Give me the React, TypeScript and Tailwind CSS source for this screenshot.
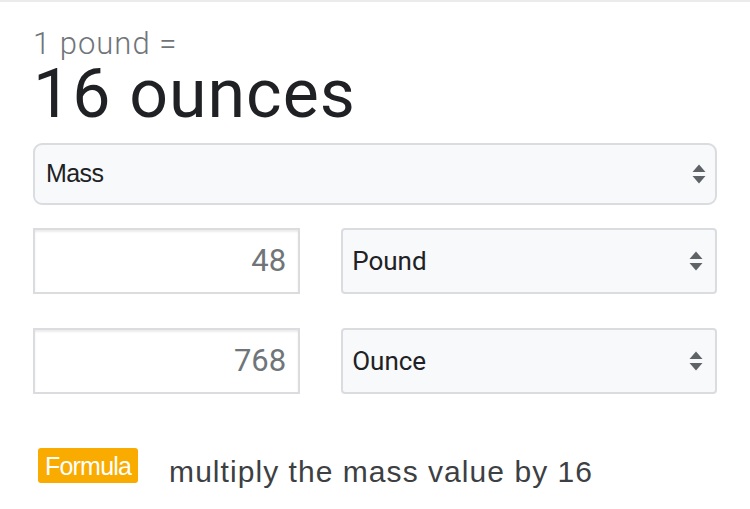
import React from "react";

function Arrows() {
  return (
    <svg width="14" height="24" viewBox="0 0 14 24" className="shrink-0">
      <path d="M7 2.5 L13.5 10 L0.5 10 Z" fill="#5f6368" />
      <path d="M7 21.5 L13.5 14 L0.5 14 Z" fill="#5f6368" />
    </svg>
  );
}

export default function App() {
  const gsans = { fontFamily: "Roboto, 'Open Sans', sans-serif" };
  const arial = { fontFamily: "'Liberation Sans', Arial, sans-serif" };
  return (
    <div className="w-[750px] h-[509px] bg-white overflow-hidden border-t-2 border-[#ebebeb]">
      <div className="pl-[33px] pr-[33px]">
        <div
          className="text-[31px] leading-[30px] text-[#70757a] mt-[27px] font-light tracking-[1px]"
          style={gsans}
        >
          1 pound =
        </div>
        <div
          className="text-[68px] leading-[56px] text-[#202124] mt-[7px] tracking-[1px]"
          style={gsans}
        >
          16 ounces
        </div>
        <div className="mt-[21px] h-[62px] w-[684px] rounded-[9px] border-2 border-[#dadce0] bg-[#f8f9fa] flex items-center justify-between pl-[11px] pr-[9px]">
          <span className="text-[25px] text-[#202124] tracking-[-0.6px]" style={arial}>
            Mass
          </span>
          <Arrows />
        </div>
        <div className="mt-[23px] flex flex-col gap-[34px]">
          {[
            { v: "48", u: "Pound" },
            { v: "768", u: "Ounce" },
          ].map((r) => (
            <div key={r.v} className="flex gap-[41px]">
              <div className="w-[268px] h-[66px] border-2 border-[#dadce0] bg-white shadow-[inset_0_2px_2px_rgba(0,0,0,0.08)] flex items-center justify-end pr-[12px]">
                <span className="text-[31px] text-[#70757a]" style={gsans}>
                  {r.v}
                </span>
              </div>
              <div className="w-[377px] h-[66px] rounded-[4px] border-2 border-[#dadce0] bg-[#f8f9fa] flex items-center justify-between pl-[9px] pr-[12px]">
                <span className="text-[26px] text-[#202124]" style={gsans}>
                  {r.u}
                </span>
                <Arrows />
              </div>
            </div>
          ))}
        </div>
        <div className="mt-[54px] flex items-start gap-[31px] pl-[5px]">
          <span
            className="bg-[#f9ab00] text-white text-[25px] leading-[37px] h-[35px] px-[7px] rounded-[3px] tracking-[-0.8px]"
            style={arial}
          >
            Formula
          </span>
          <span
            className="text-[30px] leading-[36px] text-[#3c4043] mt-[6px] tracking-[1.05px]"
            style={arial}
          >
            multiply the mass value by 16
          </span>
        </div>
      </div>
    </div>
  );
}
